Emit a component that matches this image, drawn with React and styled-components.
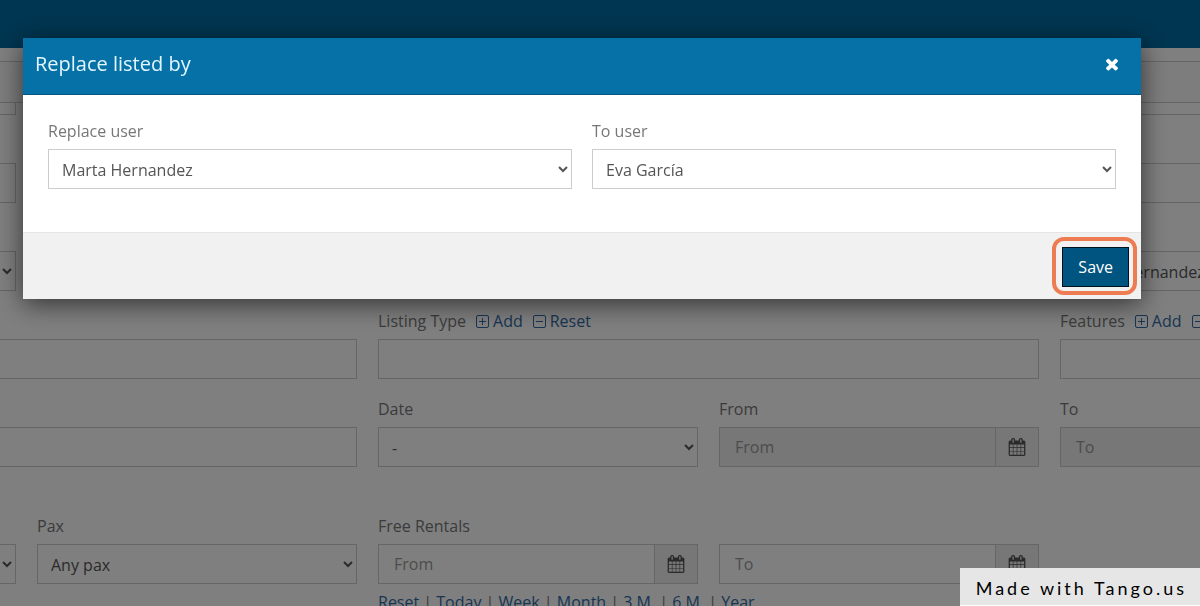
import React from 'react'
import styled, { createGlobalStyle } from 'styled-components'

const CALENDAR = "M192 1664h288v-288h-288v288zm352 0h320v-288h-320v288zm-352-352h288v-320h-288v320zm352 0h320v-320h-320v320zm-352-384h288v-288h-288v288zm736 736h320v-288h-320v288zm-384-736h320v-288h-320v288zm768 736h288v-288h-288v288zm-384-352h320v-320h-320v320zm-352-864v-288q0-13-9.5-22.5t-22.5-9.5h-64q-13 0-22.5 9.5t-9.5 22.5v288q0 13 9.5 22.5t22.5 9.5h64q13 0 22.5-9.5t9.5-22.5zm736 864h288v-320h-288v320zm-384-384h320v-288h-320v288zm384 0h288v-288h-288v288zm32-480v-288q0-13-9.5-22.5t-22.5-9.5h-64q-13 0-22.5 9.5t-9.5 22.5v288q0 13 9.5 22.5t22.5 9.5h64q13 0 22.5-9.5t9.5-22.5zm384-64v1280q0 52-38 90t-90 38h-1408q-52 0-90-38t-38-90v-1280q0-52 38-90t90-38h128v-96q0-66 47-113t113-47h64q66 0 113 47t47 113v96h384v-96q0-66 47-113t113-47h64q66 0 113 47t47 113v96h128q52 0 90 38t38 90z"
const TIMES = "M1490 1322q0 40-28 68l-136 136q-28 28-68 28t-68-28l-294-294-294 294q-28 28-68 28t-68-28l-136-136q-28-28-28-68t28-68l294-294-294-294q-28-28-28-68t28-68l136-136q28-28 68-28t68 28l294 294 294-294q28-28 68-28t68 28l136 136q28 28 28 68t-28 68l-294 294 294 294q28 28 28 68z"

const periods = ["Reset", "Today", "Week", "Month", "3 M.", "6 M.", "Year"]

const SquareIcon = ({ plus }) => (
  <svg width="13" height="13" viewBox="0 0 13 13" fill="none" stroke="currentColor" aria-hidden="true">
    <rect x="0.5" y="0.5" width="12" height="12" rx="1.5" />
    <path d={plus ? "M3 6.5h7M6.5 3v7" : "M3 6.5h7"} />
  </svg>
)

const DateInput = ({ id, placeholder, disabled, label }) => (
  <Group>
    <GroupInput id={id} placeholder={placeholder} disabled={disabled} aria-label={label} />
    <Addon type="button" aria-label="Open calendar">
      <svg width="18" height="18" viewBox="0 0 1792 1792" fill="currentColor"><path d={CALENDAR} /></svg>
    </Addon>
  </Group>
)

const TagLabel = ({ id, text }) => (
  <LabelRow>
    <Label htmlFor={id}>{text}</Label>
    <TagLink href="#add"><SquareIcon plus />Add</TagLink>
    <TagLink href="#reset"><SquareIcon />Reset</TagLink>
  </LabelRow>
)

const App = () => {
  return (
    <>
      <GlobalStyle />
      <Page>
        <TopBar />
        <SectionBar />
        <Filters>
          <Row>
            <CutInput aria-label="Reference" />
            <LastCutInput aria-label="Province" />
          </Row>
          <Row>
            <Field><LabelRow /><Input aria-label="Area" /></Field>
            <Field $col={5}><LabelRow /><Input aria-label="City" /></Field>
          </Row>
          <Row>
            <Field><LabelRow /><Select aria-label="Status"><option></option></Select></Field>
            <Field $col={5}>
              <LabelRow />
              <Select aria-label="Listed by"><option>Marta Hernandez</option></Select>
            </Field>
          </Row>
          <Row>
            <Field $span={2}><LabelRow /><Input aria-label="Tags" /></Field>
            <Field $span={2}><TagLabel id="type" text="Listing Type" /><Input id="type" /></Field>
            <Field><TagLabel id="features" text="Features" /><Input id="features" /></Field>
          </Row>
          <Row $wide>
            <Field $span={2}><LabelRow /><Input aria-label="Keywords" /></Field>
            <Field>
              <LabelRow><Label htmlFor="date">Date</Label></LabelRow>
              <Select id="date"><option>-</option></Select>
            </Field>
            <Field>
              <LabelRow><Label htmlFor="from">From</Label></LabelRow>
              <DateInput id="from" placeholder="From" disabled />
            </Field>
            <Field>
              <LabelRow><Label htmlFor="to">To</Label></LabelRow>
              <DateInput id="to" placeholder="To" disabled />
            </Field>
          </Row>
          <Row>
            <Field><LabelRow /><Select aria-label="Bedrooms"><option></option></Select></Field>
            <Field>
              <LabelRow><Label htmlFor="pax">Pax</Label></LabelRow>
              <Select id="pax"><option>Any pax</option></Select>
            </Field>
            <Field>
              <LabelRow><Label htmlFor="free">Free Rentals</Label></LabelRow>
              <DateInput id="free" placeholder="From" />
              <Periods>
                {periods.map((p, i) => (
                  <React.Fragment key={p}>
                    {i > 0 && " | "}
                    <Link href="#period">{p}</Link>
                  </React.Fragment>
                ))}
              </Periods>
            </Field>
            <Field><LabelRow /><DateInput placeholder="To" label="Free rentals to" /></Field>
          </Row>
        </Filters>
      </Page>

      <Overlay>
        <Modal role="dialog" aria-labelledby="title">
          <ModalHeader>
            <Title id="title">Replace listed by</Title>
            <Close type="button" aria-label="Close">
              <svg width="18" height="18" viewBox="0 0 1792 1792" fill="currentColor"><path d={TIMES} /></svg>
            </Close>
          </ModalHeader>
          <ModalBody>
            <Field>
              <LabelRow><Label htmlFor="old">Replace user</Label></LabelRow>
              <Select id="old"><option>Marta Hernandez</option></Select>
            </Field>
            <Field>
              <LabelRow><Label htmlFor="new">To user</Label></LabelRow>
              <Select id="new"><option>Eva García</option></Select>
            </Field>
          </ModalBody>
          <ModalFooter>
            <Save type="button">Save</Save>
          </ModalFooter>
        </Modal>
      </Overlay>
      <Badge>Made with Tango.us</Badge>
    </>
  )
}

export default App

const GlobalStyle = createGlobalStyle`
  * {
    box-sizing: border-box;
  }
  body {
    margin: 0;
    background: #fff;
    color: #777;
    font-family: "Open Sans", Arial, sans-serif;
    font-size: 16px;
    line-height: 22px;
  }
  input, select, button {
    font: inherit;
  }
`
const Page = styled.div`
  height: 100vh;
  overflow: hidden;
`
const TopBar = styled.header`
  height: 48px;
  background: #006ca2;
`
const SectionBar = styled.div`
  height: 42px;
  margin-top: 13px;
  background: #fafafa;
  border-top: 1px solid #ccc;
  border-bottom: 1px solid #ccc;
`
const Filters = styled.form`
  margin: 0 -180px 0 -304px;
`
const Row = styled.div`
  display: grid;
  grid-template-columns: repeat(5, minmax(0, 1fr));
  column-gap: 21px;
  margin-bottom: ${p => p.$wide ? "55px" : "26px"};
`
const Field = styled.div`
  min-width: 0;
  grid-column: ${p => p.$col || "auto"} / span ${p => p.$span || 1};
`
const LabelRow = styled.div`
  display: flex;
  align-items: flex-start;
  gap: 10px;
  height: 22px;
  line-height: 9px;
`
const Label = styled.label`
  color: #777;
`
const Link = styled.a`
  color: #2f6ba5;
  text-decoration: none;
`
const TagLink = styled(Link)`
  display: flex;
  align-items: center;
  gap: 4px;
  height: 9px;
`
const Input = styled.input`
  display: block;
  width: 100%;
  height: 40px;
  padding: 0 15px;
  border: 1px solid #ccc;
  border-radius: 0;
  background: #fff;
  color: #555;

  &:disabled {
    background: #eee;
  }
  &::placeholder {
    color: #999;
  }
`
const CutInput = styled(Input)`
  height: 12px;
  border-top: 0;
`
const LastCutInput = styled(CutInput)`
  grid-column: 5;
`
const Select = styled.select`
  display: block;
  width: 100%;
  height: 40px;
  padding: 1px 2px 0 9px;
  border: 1px solid #ccc;
  border-radius: 0;
  background: #fff;
  color: #555;
`
const Group = styled.div`
  display: flex;
`
const GroupInput = styled(Input)`
  flex: 1;
  min-width: 0;
  border-right: 0;
`
const Addon = styled.button`
  display: flex;
  align-items: center;
  justify-content: center;
  width: 44px;
  height: 40px;
  padding: 0;
  border: 1px solid #ccc;
  background: #eee;
  color: #555;
`
const Periods = styled.div`
  margin-top: 7px;
  white-space: nowrap;
`
const Overlay = styled.div`
  position: fixed;
  inset: 0;
  padding: 38px 59px 0 23px;
  background: rgba(0, 0, 0, 0.5);
`
const Modal = styled.div`
  background: #fff;
  box-shadow: 0 5px 24px rgba(0, 0, 0, 0.6);
`
const ModalHeader = styled.div`
  display: flex;
  align-items: center;
  justify-content: space-between;
  height: 57px;
  padding: 0 20px 4px 12px;
  background: #0571a6;
  border-bottom: 1px solid #045580;
`
const Title = styled.h4`
  margin: 0;
  color: #e3f6ff;
  font-size: 20px;
  font-weight: 400;
`
const Close = styled.button`
  display: flex;
  padding: 0;
  border: 0;
  background: none;
  color: #fff;
`
const ModalBody = styled.div`
  display: grid;
  grid-template-columns: 1fr 1fr;
  gap: 20px;
  padding: 32px 25px 43px;
`
const ModalFooter = styled.div`
  display: flex;
  justify-content: flex-end;
  padding: 14px 12px 12px;
  background: #f1f1f1;
  border-top: 1px solid #e5e5e5;
`
const Save = styled.button`
  position: relative;
  height: 40px;
  padding: 0 15px;
  border: 1px solid #00111c;
  background: #005580;
  color: #fff;

  /* focus ring around the button */
  &::after {
    content: "";
    position: absolute;
    inset: -11px -9px -9px -11px;
    border: 4px solid #ee7c52;
    border-radius: 12px;
  }
`
const Badge = styled.div`
  position: fixed;
  right: 0;
  bottom: 0;
  padding: 9px 13px 6px 16px;
  background: #e6e6e6;
  border-bottom: 1px solid #fff;
  color: #000;
  font-family: Lato, sans-serif;
  font-size: 18px;
  letter-spacing: 3px;
`
